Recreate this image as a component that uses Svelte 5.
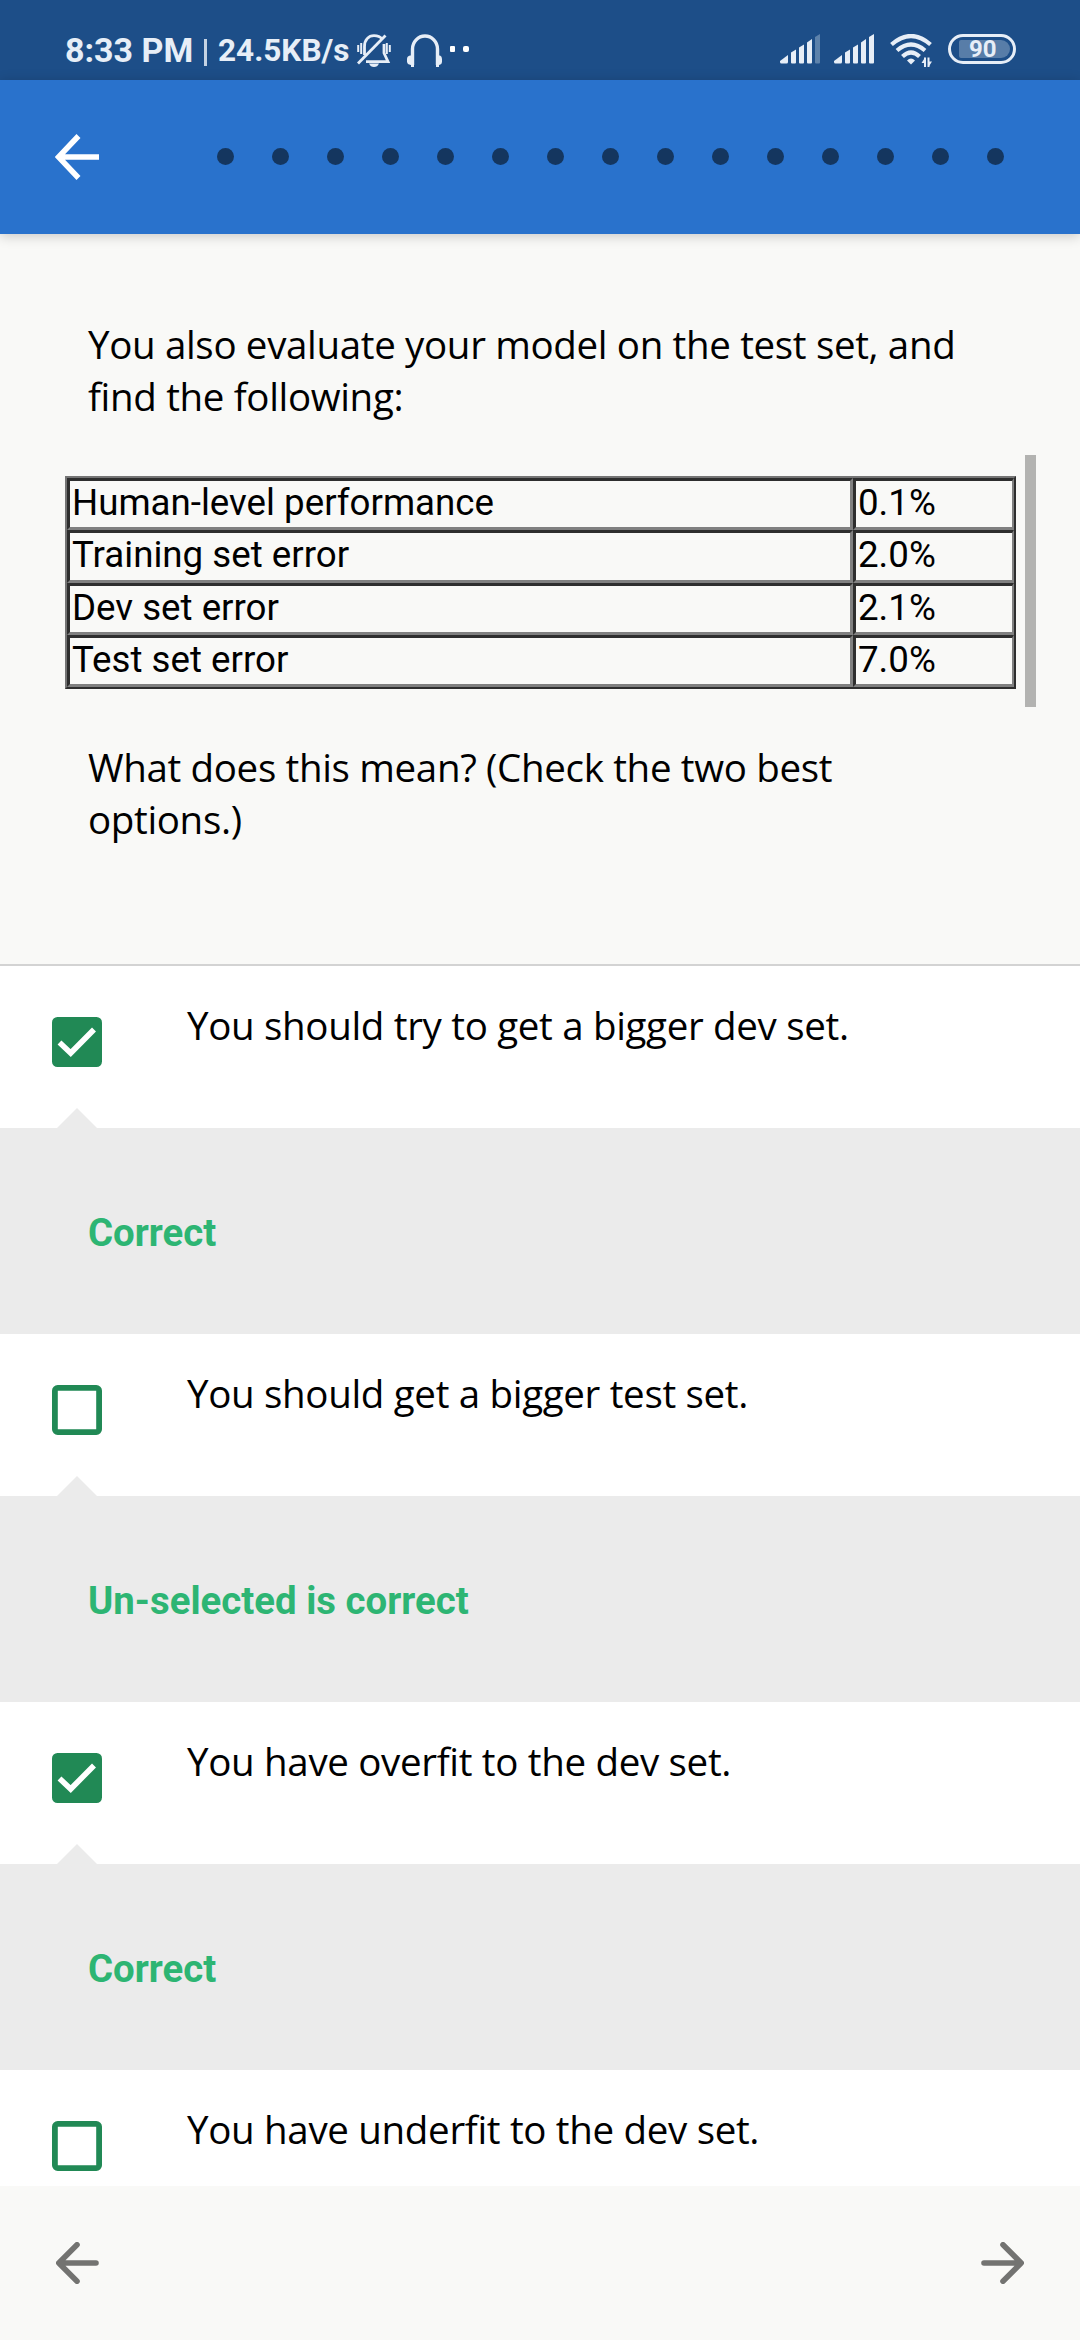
<script>
  const signals = [
    { id: 'sim1', level: 4 },
    { id: 'sim2', level: 5 }
  ];
  const bars = [
    'M0 27 8 21V28Q8 29.500 6.500 29.500H1.500Q0 29.500 0 28Z',
    'M11 18.500 16 15.500V28.500Q16 29.500 15 29.500H12Q11 29.500 11 28.500Z',
    'M19 13.500 24 10.500V28.500Q24 29.500 23 29.500H20Q19 29.500 19 28.500Z',
    'M27 8.500 32 5V28.500Q32 29.500 31 29.500H28Q27 29.500 27 28.500Z',
    'M35 3 40 0V28.500Q40 29.500 39 29.500H36Q35 29.500 35 28.500Z'
  ];
  const steps = Array.from({ length: 15 }, (_, i) => i);
  const errors = [
    ['Human-level performance', '0.1%'],
    ['Training set error', '2.0%'],
    ['Dev set error', '2.1%'],
    ['Test set error', '7.0%']
  ];
  const options = [
    { text: 'You should try to get a bigger dev set.', checked: true, feedback: 'Correct' },
    { text: 'You should get a bigger test set.', checked: false, feedback: 'Un-selected is correct' },
    { text: 'You have overfit to the dev set.', checked: true, feedback: 'Correct' },
    { text: 'You have underfit to the dev set.', checked: false, feedback: '' }
  ];
</script>

<div class="screen">
  <div class="status">
    <span class="time">8:33 PM</span>
    <span class="bar"></span>
    <span class="speed">24.5KB/s</span>
    <svg class="bell" width="34" height="34" viewBox="0 0 34 34" fill="none" stroke="#e7eef7" stroke-width="2.800">
      <path d="M7.500 21V12.500C7.500 6 11.500 1.700 17 1.700C20.500 1.700 23.500 3 25 5M27 10V19L31 27.600H9" />
      <path d="M1 29.500 28.500 1.500" stroke-width="2.800" />
      <path d="M1.200 11V18M4.200 9V20M29.800 9V20M32.800 11V18" stroke-width="2" />
      <path d="M12 29.500H22Q20.500 33 17 33T12 29.500Z" fill="#e7eef7" stroke="none" />
    </svg>
    <svg class="phones" width="36" height="34" viewBox="0 0 36 34">
      <path d="M5.500 31V15A12.500 13 0 0 1 30.500 15V31" fill="none" stroke="#e7eef7" stroke-width="3.400" />
      <path d="M7 21.500H3Q0 22 0 25V27.500Q0 30.500 4 31V33H7ZM29 21.500H33Q35 22 35 25V27.500Q35 30.500 32 31V33H29Z" fill="#e7eef7" />
    </svg>
    <span class="more"><i></i><i></i></span>
    <div class="right">
      {#each signals as s (s.id)}
        <svg class="signal" width="40" height="30" viewBox="0 0 40 30" fill="#e7eef7">
          {#each bars as d, i}
            <path {d} opacity={i < s.level ? 1 : 0.32} />
          {/each}
        </svg>
      {/each}
      <svg class="wifi" width="43" height="34" viewBox="0 0 43 34" fill="none" stroke="#e7eef7" stroke-width="4.200">
        <path d="M1.500 10.500Q21 -6.500 40.500 10.500" />
        <path d="M7 16.500Q21 4.500 35 16.500" />
        <path d="M12.500 22.500Q21 14.500 29.500 22.500" />
        <path d="M17 26.500Q21 22.500 25 26.500L21 30.500Z" fill="#e7eef7" stroke="none" />
        <path d="M35 23.500V33M38.500 33V23.500" stroke-width="2" />
        <path d="M35 23.500 31.500 29H35ZM38.500 33 42 27.500H38.500Z" fill="#e7eef7" stroke="none" />
      </svg>
      <div class="battery"><div class="charge"></div><span>90</span></div>
    </div>
  </div>

  <header>
    <svg width="44" height="46" viewBox="0 0 44 46" fill="none" stroke="#fff" stroke-width="5.500">
      <path d="M23.500 2 3.500 23 23.500 44M3.500 23H44" />
    </svg>
    <div class="steps">
      {#each steps as step (step)}<span></span>{/each}
    </div>
  </header>

  <section class="question">
    <p class="intro">You also evaluate your model on the test set, and<br />find the following:</p>
    <div class="scroller">
      <div class="table">
        {#each errors as [name, value]}
          <div class="cell">{name}</div>
          <div class="cell value">{value}</div>
        {/each}
      </div>
      <div class="thumb"></div>
    </div>
    <p class="ask">What does this mean? (Check the two best<br />options.)</p>
  </section>

  <main>
    {#each options as o}
      <div class="option">
        <svg width="50" height="50" viewBox="0 0 50 50">
          {#if o.checked}
            <rect width="50" height="50" rx="5.500" fill="#218955" />
            <path d="M7.500 25.500 18.700 36 42 12.500" fill="none" stroke="#fff" stroke-width="5.600" />
          {:else}
            <rect x="2.900" y="2.900" width="44.200" height="44.200" rx="2.800" fill="none" stroke="#218955" stroke-width="5.800" />
          {/if}
        </svg>
        <span>{o.text}</span>
      </div>
      {#if o.feedback}
        <div class="feedback">
          <svg class="notch" width="42" height="21" viewBox="0 0 42 21"><path d="M0 21 21 0 42 21Z" fill="#ebebeb" /></svg>
          {o.feedback}
        </div>
      {/if}
    {/each}
  </main>

  <footer>
    <svg width="43" height="42" viewBox="0 0 43 42" fill="none" stroke="#737371" stroke-width="5.600" stroke-linecap="round" stroke-linejoin="round">
      <path d="M21 2.800 2.800 21 21 39.200M3 21H40" />
    </svg>
    <svg width="43" height="42" viewBox="0 0 43 42" fill="none" stroke="#737371" stroke-width="5.600" stroke-linecap="round" stroke-linejoin="round">
      <path d="M22 2.800 40.200 21 22 39.200M40 21H3" />
    </svg>
  </footer>
</div>

<style>
  :global(body) {
    margin: 0;
    background: #f9f9f7;
  }
  .screen {
    width: 1080px;
    height: 2340px;
    display: flex;
    flex-direction: column;
    overflow: hidden;
    background: #f9f9f7;
    color: #000;
    font-family: 'Open Sans', sans-serif;
    font-size: 38.500px;
    line-height: 52px;
  }
  svg {
    display: block;
    flex: none;
  }
  p {
    margin: 0;
    white-space: nowrap;
  }
  .status {
    height: 80px;
    box-sizing: border-box;
    padding: 34px 64px 0 65px;
    display: flex;
    align-items: flex-start;
    background: #1d4e88;
    color: #e7eef7;
    font-family: Roboto, sans-serif;
    font-weight: 700;
    white-space: nowrap;
  }
  .time {
    width: 129px;
    font-size: 34px;
    line-height: 33px;
  }
  .bar {
    width: 3px;
    height: 27px;
    margin: 5px 0 0 10px;
    background: #c5d3e4;
  }
  .speed {
    width: 131px;
    margin-left: 11px;
    font-size: 31.500px;
    line-height: 33px;
  }
  .bell {
    margin-left: 8px;
  }
  .phones {
    margin-left: 16px;
  }
  .more {
    display: flex;
    gap: 8px;
    margin: 12px 0 0 7px;
  }
  .more i {
    width: 5px;
    height: 6px;
    border-radius: 1px;
    background: #fff;
  }
  .more i:last-child {
    width: 6px;
    border-radius: 2px;
  }
  .right {
    display: flex;
    margin-left: auto;
  }
  .signal {
    margin-right: 14px;
  }
  .wifi {
    margin: 0 15px 0 2px;
  }
  .battery {
    width: 68px;
    height: 30px;
    box-sizing: border-box;
    border: 3px solid #e7eef7;
    border-radius: 15px;
    padding: 3px 3px 3px 8px;
    display: grid;
  }
  .battery > * {
    grid-area: 1 / 1;
  }
  .charge {
    width: 51px;
    height: 18px;
    border-radius: 2px 9px 9px 2px;
    background: #587da8;
  }
  .battery span {
    padding-left: 10px;
    font-size: 24px;
    line-height: 19px;
  }
  header {
    height: 154px;
    flex: none;
    display: flex;
    align-items: center;
    padding-left: 55px;
    background: #2972cc;
    box-shadow: 0 2px 12px rgba(0, 0, 0, 0.2);
    z-index: 1;
  }
  .steps {
    display: flex;
    gap: 38px;
    margin: 0 0 2px 118px;
  }
  .steps span {
    width: 17px;
    height: 17px;
    border-radius: 50%;
    background: #14365f;
  }
  .question {
    height: 732px;
    flex: none;
    box-sizing: border-box;
    padding-top: 84px;
    border-bottom: 2px solid #d3d3d3;
  }
  .intro,
  .ask {
    padding-left: 88px;
    letter-spacing: -0.340px;
  }
  .scroller {
    display: flex;
    justify-content: space-between;
    height: 252px;
    margin: 33px 44px 0 65px;
  }
  .table {
    width: 951px;
    height: 213px;
    box-sizing: border-box;
    margin-top: 21px;
    display: grid;
    grid-template-columns: 786px 1fr;
    grid-template-rows: repeat(4, 1fr);
    border: 2px solid;
    border-color: #757575 #2e2e2e #2e2e2e #757575;
    font-family: Roboto, sans-serif;
    font-size: 36.700px;
    line-height: 43px;
  }
  .cell {
    padding-left: 2px;
    border: 3px solid;
    border-color: #2e2e2e #808080 #808080 #2e2e2e;
  }
  .value {
    border-right-width: 2px;
  }
  .thumb {
    width: 11px;
    background: #b3b3b1;
  }
  .ask {
    margin-top: 34px;
  }
  main {
    height: 1220px;
    flex: none;
    overflow: hidden;
    background: #fff;
  }
  .option {
    height: 162px;
    display: flex;
    align-items: flex-start;
  }
  .option svg {
    margin: 51px 0 0 52px;
  }
  .option span {
    margin: 33px 0 0 85px;
    letter-spacing: -0.320px;
    white-space: nowrap;
  }
  .feedback {
    position: relative;
    height: 206px;
    box-sizing: border-box;
    padding: 79px 0 0 88px;
    background: #ebebeb;
    color: #2db573;
    font-family: Roboto, sans-serif;
    font-weight: 700;
    font-size: 38.400px;
  }
  .notch {
    position: absolute;
    top: -20px;
    left: 56px;
  }
  footer {
    flex: 1;
    display: flex;
    justify-content: space-between;
    align-items: center;
    padding: 0 56px;
    background: #f9f9f7;
  }
</style>
